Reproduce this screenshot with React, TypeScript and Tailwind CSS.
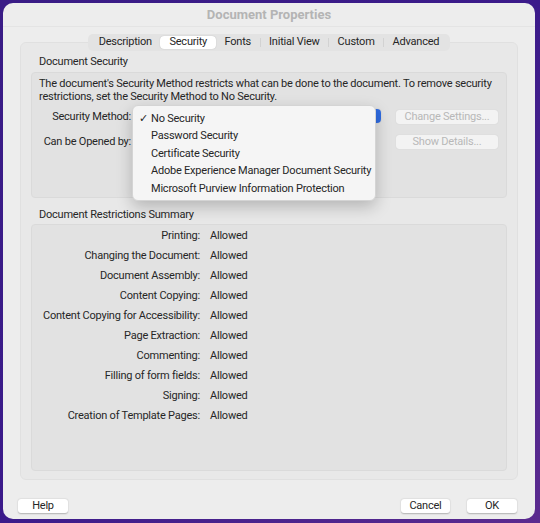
import React from "react";

const rows = [
  "Printing:",
  "Changing the Document:",
  "Document Assembly:",
  "Content Copying:",
  "Content Copying for Accessibility:",
  "Page Extraction:",
  "Commenting:",
  "Filling of form fields:",
  "Signing:",
  "Creation of Template Pages:",
];

const tabs = ["Description", "Security", "Fonts", "Initial View", "Custom", "Advanced"];

export default function App() {
  return (
    <div
      className="w-[540px] h-[523px] bg-gradient-to-br from-[#3a1c86] via-[#3b1a8a] to-[#5b2a8f] p-[3px] pr-[5px] pb-[4px] whitespace-nowrap"
      style={{ fontFamily: "Roboto, 'Liberation Sans', sans-serif" }}
    >
      <div className="h-full rounded-[10px] bg-[#ededed] flex flex-col text-[11px] tracking-[-0.22px] text-[#262626] overflow-hidden">
        {/* Title */}
        <div className="h-[24px] flex items-center justify-center text-[13px] font-bold tracking-normal text-[#b4b4b4] border-b border-[#e4e4e4]">
          Document Properties
        </div>

        {/* Tab area */}
        <div className="flex-1 flex flex-col px-[17px] pt-[7px]">
          <div className="flex justify-center relative z-10 -mb-[9px]">
            <div className="flex items-center h-[17px] rounded-[5px] bg-[#e3e3e3] px-[2px] gap-0">
              {tabs.map((t, i) => (
                <React.Fragment key={t}>
                  {i > 0 && t !== "Security" && tabs[i - 1] !== "Security" && (
                    <div className="w-px h-[9px] bg-[#d2d2d2]" />
                  )}
                  <div
                    className={
                      t === "Security"
                        ? "h-[13px] px-[9px] flex items-center rounded-[4px] bg-white shadow-[0_0_1px_rgba(0,0,0,0.25)]"
                        : "h-[13px] px-[8.5px] flex items-center"
                    }
                  >
                    {t}
                  </div>
                </React.Fragment>
              ))}
            </div>
          </div>

          <div className="h-[438px] rounded-[6px] bg-[#e8e8e8] border border-[#e0e0e0] px-[10px] pt-[12px] flex flex-col">
            <div className="pl-[8px] h-[14px] leading-[14px]">Document Security</div>
            <div className="mt-[3px] h-[126px] rounded-[4px] bg-[#e2e2e2] border border-[#dadada] px-[7px] pt-[4px] relative">
              <div className="leading-[13px]">
                The document's Security Method restricts what can be done to the document. To remove security
                <br />
                restrictions, set the Security Method to No Security.
              </div>
              <div className="flex mt-[6px]">
                <div className="w-[92px] flex flex-col items-end gap-[11px] pt-[1px]">
                  <div className="h-[14px] leading-[14px]">Security Method:</div>
                  <div className="h-[14px] leading-[14px]">Can be Opened by:</div>
                </div>
                <div className="ml-[3px] w-[247px] h-[14px] rounded-[4px] bg-white flex justify-end shadow-[0_0_1px_rgba(0,0,0,0.3)]">
                  <div className="w-[16px] h-[14px] rounded-r-[4px] bg-[#2f6be0]" />
                </div>
                <div className="ml-[15px] flex flex-col gap-[11px] pt-[1px]">
                  <div className="w-[102px] h-[14px] rounded-[3px] bg-[#f3f3f3] shadow-[0_0_1px_rgba(0,0,0,0.15)] text-[#b8b8b8] flex items-center justify-center">
                    Change Settings...
                  </div>
                  <div className="w-[102px] h-[14px] rounded-[3px] bg-[#f3f3f3] shadow-[0_0_1px_rgba(0,0,0,0.15)] text-[#b8b8b8] flex items-center justify-center">
                    Show Details...
                  </div>
                </div>
              </div>

              {/* Popup menu */}
              <div className="absolute left-[100px] top-[32px] w-[244px] h-[96px] rounded-[6px] bg-[#f5f5f5] border border-[#d4d4d4] shadow-[0_6px_16px_rgba(0,0,0,0.22)] pt-[4px] z-20">
                {[
                  "No Security",
                  "Password Security",
                  "Certificate Security",
                  "Adobe Experience Manager Document Security",
                  "Microsoft Purview Information Protection",
                ].map((m, i) => (
                  <div key={m} className="h-[17.5px] flex items-center">
                    <span className="w-[18px] shrink-0 text-right pr-[3px] text-[11px]">{i === 0 ? "✓" : ""}</span>
                    <span>{m}</span>
                  </div>
                ))}
              </div>
            </div>

            <div className="pl-[8px] mt-[10px] h-[14px] leading-[14px]">Document Restrictions Summary</div>
            <div className="mt-[2px] h-[247px] rounded-[4px] bg-[#e2e2e2] border border-[#dadada] pt-[1px]">
              {rows.map((r) => (
                <div key={r} className="flex h-[20px] items-center">
                  <div className="w-[168px] text-right">{r}</div>
                  <div className="ml-[10px]">Allowed</div>
                </div>
              ))}
            </div>
          </div>

          {/* Footer */}
          <div className="flex items-center mt-[19px]">
            <div className="w-[50px] h-[14px] rounded-[3px] bg-white shadow-[0_0.5px_1.5px_rgba(0,0,0,0.25)] flex items-center justify-center -ml-[2px]">
              Help
            </div>
            <div className="flex-1" />
            <div className="w-[49px] h-[14px] rounded-[3px] bg-white shadow-[0_0.5px_1.5px_rgba(0,0,0,0.25)] flex items-center justify-center">
              Cancel
            </div>
            <div className="w-[50px] h-[14px] rounded-[3px] bg-white shadow-[0_0.5px_1.5px_rgba(0,0,0,0.25)] flex items-center justify-center ml-[17px] mr-[1px]">
              OK
            </div>
          </div>
        </div>
      </div>
    </div>
  );
}
